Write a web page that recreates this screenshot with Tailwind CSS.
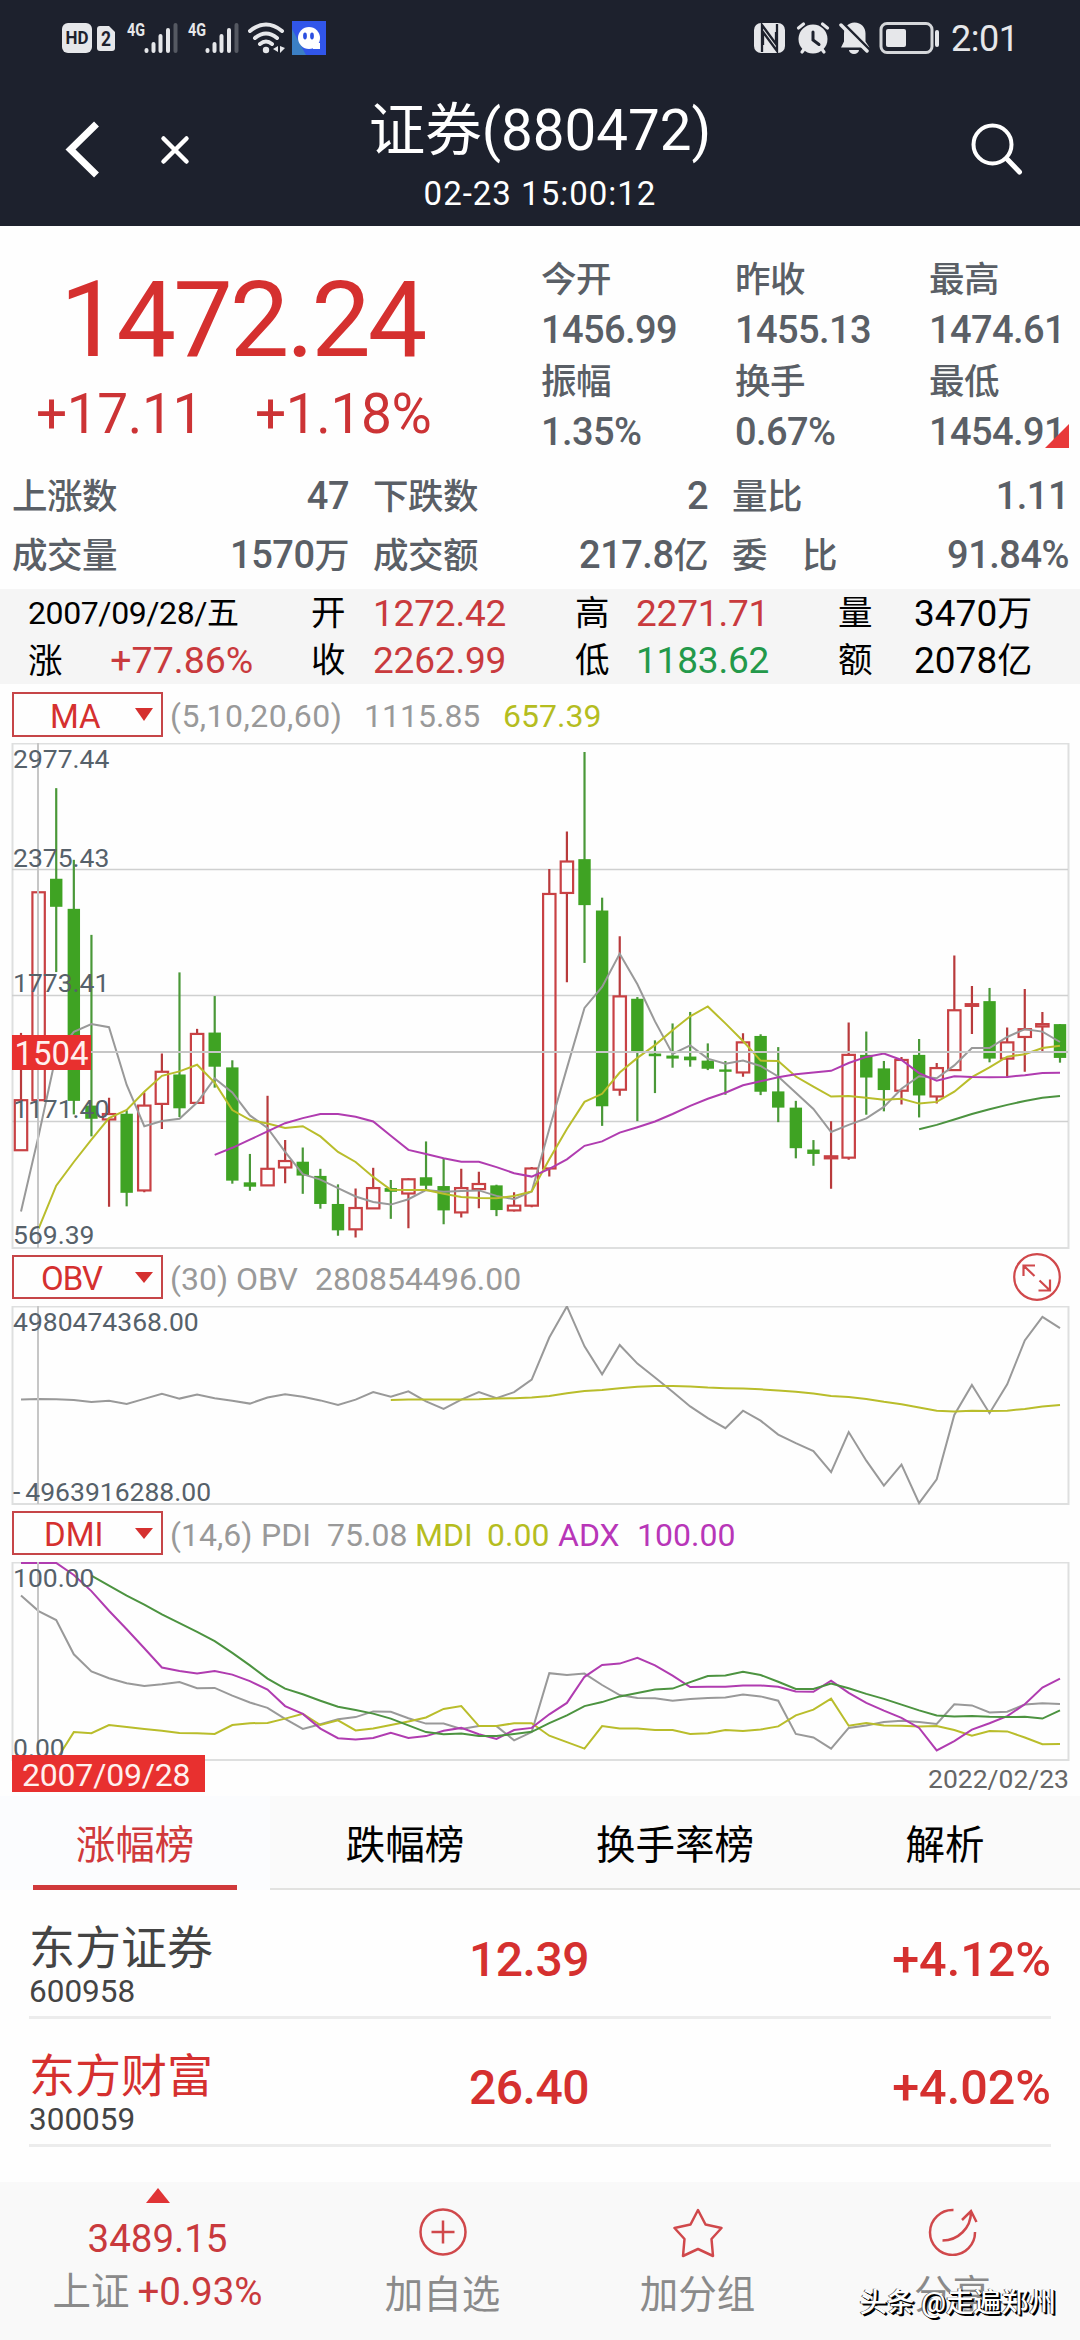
<!DOCTYPE html>
<html lang="zh-CN">
<head>
<meta charset="utf-8">
<title>证券(880472)</title>
<script src="https://cdn.jsdelivr.net/npm/@tailwindcss/browser@4"></script>
</head>
<body class="w-[1080px] h-[2340px] overflow-hidden bg-[#fefefe] font-[Roboto,'Noto_Sans_CJK_SC',sans-serif] flex flex-col whitespace-nowrap">

<!-- Status bar and title -->
<header class="h-[226px] shrink-0 bg-[#1d212d] text-white flex flex-col">
  <div class="h-[75px] flex items-center justify-between pl-[62px] pr-[66px] text-[#e6e7ea]">
    <div class="flex items-center">
      <svg width="54" height="32" viewBox="0 0 54 32" fill="#e6e7ea"><rect y="1" width="30" height="30" rx="6"/><path d="M38 4h9l6 6v16a3 3 0 0 1-3 3H38a3 3 0 0 1-3-3V7a3 3 0 0 1 3-3z"/><text x="3.500" y="22" font-size="18" font-weight="700" textLength="23" lengthAdjust="spacingAndGlyphs" fill="#1d212d">HD</text><text x="39" y="24" font-size="20" font-weight="700" textLength="10" lengthAdjust="spacingAndGlyphs" fill="#1d212d">2</text></svg>
      <svg class="ml-[11px] overflow-visible" width="51" height="34" viewBox="0 0 51 34" fill="none" stroke="#e6e7ea" stroke-width="4" stroke-linecap="round"><text x="0" y="15" font-size="19" font-weight="700" textLength="18" lengthAdjust="spacingAndGlyphs" fill="#e6e7ea" stroke="none">4G</text><path d="M19.500 29v1M26.500 23v7M33.500 15v15M41 9v21"/><path d="M48.500 4v26" stroke="#555962"/></svg>
      <svg class="ml-[10px] overflow-visible" width="51" height="34" viewBox="0 0 51 34" fill="none" stroke="#e6e7ea" stroke-width="4" stroke-linecap="round"><text x="0" y="15" font-size="19" font-weight="700" textLength="18" lengthAdjust="spacingAndGlyphs" fill="#e6e7ea" stroke="none">4G</text><path d="M19.500 29v1M26.500 23v7M33.500 15v15M41 9v21"/><path d="M48.500 4v26" stroke="#555962"/></svg>
      <svg class="ml-[9px]" width="38" height="32" viewBox="0 0 38 32" fill="none" stroke="#e6e7ea" stroke-width="4" stroke-linecap="round"><path d="M2 9Q18 -4 34 9M7 16q11-9 22 0M12 22q6-5 12 0"/><circle cx="18" cy="28" r="3.200" fill="#e6e7ea" stroke="none"/><path d="M30 24v6l-5-3zM32 24v7l5-5z" fill="#e6e7ea" stroke="none"/></svg>
      <svg class="ml-[6px]" width="34" height="34" viewBox="0 0 34 34"><rect width="34" height="34" fill="#3156ea"/><path d="M0 34V8l14 26z" fill="#3b7fc4"/><circle cx="17" cy="17" r="11" fill="#fff"/><path d="M21 22h7v6h-7z" fill="#fff"/><ellipse cx="13" cy="15" rx="1.900" ry="3.400" fill="#2c4fe0"/><ellipse cx="20" cy="15" rx="1.900" ry="3.400" fill="#2c4fe0"/></svg>
    </div>
    <div class="flex items-center">
      <svg width="31" height="32" viewBox="0 0 31 32"><rect y="1" width="31" height="30" rx="7" fill="#e6e7ea"/><path d="M8 30V3l14 19V10M23 2v27L9 10v13" fill="none" stroke="#1d212d" stroke-width="2.300"/></svg>
      <svg class="ml-[11px]" width="34" height="34" viewBox="0 0 34 34" fill="none" stroke="#e6e7ea" stroke-width="4" stroke-linecap="round"><circle cx="17" cy="18" r="14.500" fill="#e6e7ea" stroke="none"/><path d="M2.500 7l5-4M31.500 7l-5-4M6 31l3-4M28 31l-3-4" stroke-width="3.200"/><path d="M17 11v8l6 4.500" stroke="#1d212d" stroke-width="3"/></svg>
      <svg class="ml-[9px]" width="31" height="34" viewBox="0 0 31 34"><path d="M15.500 1.500c7 0 11 5 11 11v8l4 6H2l3-6v-8c0-6 4-11 10.500-11zM10 29h10a5 4 0 0 1-10 0z" fill="#e6e7ea"/><path d="M1 0l29 29" stroke="#1d212d" stroke-width="4"/><path d="M2 4l26 26" stroke="#e6e7ea" stroke-width="3.500" stroke-linecap="round"/></svg>
      <svg class="ml-[9px]" width="62" height="34" viewBox="0 0 62 34"><rect x="2" y="2.500" width="51" height="29" rx="6" fill="none" stroke="#d5d7da" stroke-width="3"/><rect x="7" y="8" width="20" height="18" rx="2" fill="#e6e7ea"/><rect x="56" y="9" width="4" height="17" rx="2" fill="#e6e7ea"/></svg>
      <span class="ml-[10px] pt-[2px] text-[36px] leading-[40px] w-[63px] tracking-[-0.5px]">2:01</span>
    </div>
  </div>
  <div class="flex-1 grid grid-cols-[270px_1fr_270px]">
    <div class="flex pt-[45px] pl-[62px]">
      <svg width="40" height="60" viewBox="0 0 40 60" fill="none" stroke="#fff" stroke-width="7"><path d="M34.500 4L8.500 29.500 34.500 55"/></svg>
      <svg class="ml-[58px] mt-[15px]" width="30" height="30" viewBox="0 0 30 30" fill="none" stroke="#fff" stroke-width="4.500" stroke-linecap="round"><path d="M3.500 3.500l23 23M26.500 3.500l-23 23"/></svg>
    </div>
    <div class="flex flex-col items-center">
      <h1 class="mt-[18px] text-[56.500px] leading-[76px] font-normal">证券(880472)</h1>
      <p class="mt-[3px] text-[33px] leading-[44px] tracking-[1px]">02-23 15:00:12</p>
    </div>
    <div class="flex justify-end pt-[47px] pr-[55px]">
      <svg width="54" height="54" viewBox="0 0 54 54" fill="none" stroke="#fff" stroke-linecap="round"><circle cx="21.500" cy="22.500" r="19" stroke-width="4"/><path d="M36 37l12.500 13" stroke-width="5"/></svg>
    </div>
  </div>
</header>

<!-- Quote summary -->
<section class="h-[363px] shrink-0 flex flex-col pt-[26px] text-[#5a5f66] font-medium text-[38px]">
  <div class="flex">
    <div class="w-[541px] text-[#d5302f] font-normal">
      <div class="h-[132px] pl-[60px] pt-[2px] text-[106px] leading-[132px] tracking-[-3px]">1472.24</div>
      <div class="flex h-[60px] text-[55px] leading-[61px] text-[#cc3335] tracking-[-0.400px]"><span class="w-[221px] pl-[36px]">+17.11</span><span class="pl-[34px]">+1.18%</span></div>
    </div>
    <div class="grid grid-cols-[194px_194px_140px] grid-rows-[52px_51px_51px_52px] items-center leading-[50px] tracking-[-0.600px]">
      <span class="text-[35.500px] pt-[4px]">今开</span><span class="text-[35.500px] pt-[4px]">昨收</span><span class="text-[35.500px] pt-[4px]">最高</span>
      <span>1456.99</span><span>1455.13</span><span>1474.61</span>
      <span class="text-[35.500px] pt-[3px]">振幅</span><span class="text-[35.500px] pt-[3px]">换手</span><span class="text-[35.500px] pt-[3px]">最低</span>
      <span>1.35%</span><span>0.67%</span>
      <span class="relative">1454.91<svg class="absolute right-0 bottom-[9px]" width="24" height="24" viewBox="0 0 24 24"><path d="M24 0v24H0z" fill="#e8393a"/></svg></span>
    </div>
  </div>
  <div class="mt-[9px] grid grid-cols-[337px_335px_337px] gap-x-6 grid-rows-[59px_59px] items-center leading-[50px] pl-3 tracking-[-0.500px]">
    <div class="flex justify-between"><span class="text-[35.500px] pt-px">上涨数</span><span>47</span></div>
    <div class="flex justify-between"><span class="text-[35.500px] pt-px">下跌数</span><span>2</span></div>
    <div class="flex justify-between"><span class="text-[35.500px] pt-px">量比</span><span>1.11</span></div>
    <div class="flex justify-between"><span class="text-[35.500px] pt-px">成交量</span><span>1570<span class="text-[35px]">万</span></span></div>
    <div class="flex justify-between"><span class="text-[35.500px] pt-px">成交额</span><span>217.8<span class="text-[35px]">亿</span></span></div>
    <div class="flex justify-between"><span class="text-[35.500px] pt-px">委　比</span><span>91.84%</span></div>
  </div>
</section>

<!-- Values of the selected bar -->
<section class="h-[95px] shrink-0 bg-[#f5f5f5] text-black text-[37px] grid grid-cols-[283px_62px_202px_61px_202px_76px_1fr] grid-rows-[47px_47px] leading-[49px] pl-7 tracking-[-0.200px]">
  <span class="text-[32px] tracking-[-0.400px]">2007/09/28/五</span><span class="text-[34.500px]">开</span><span class="text-[#c93a3d]">1272.42</span><span class="text-[34.500px]">高</span><span class="text-[#c93a3d]">2271.71</span><span class="text-[34.500px]">量</span><span class="tracking-normal">3470<span class="text-[35px]">万</span></span>
  <span class="text-[34.500px]">涨<span class="text-[37.500px] pl-[48px] text-[#c93a3d] tracking-normal">+77.86%</span></span><span class="text-[34.500px]">收</span><span class="text-[#c93a3d]">2262.99</span><span class="text-[34.500px]">低</span><span class="text-[#23994a]">1183.62</span><span class="text-[34.500px]">额</span><span class="tracking-normal">2078<span class="text-[35px]">亿</span></span>
</section>

<!-- Moving averages -->
<div class="h-[59px] shrink-0 flex pt-[8px] pl-3 text-[32px] leading-[49px] text-[#999]">
  <div class="w-[151px] h-[45px] border-2 border-[#c64548] text-[#d5302f] flex items-center pl-[36px] pr-[8px] justify-between text-[33px]"><span class="pt-[3px]">MA</span><svg width="18" height="13" viewBox="0 0 18 13"><path d="M0 0h18L9 13z" fill="#d5302f"/></svg></div>
  <span class="ml-[7px] w-[194px] tracking-[0.450px]">(5,10,20,60)</span><span class="w-[139px]">1115.85</span><span class="text-[#b5bd1f]">657.39</span>
</div>
<section class="relative h-[506px] shrink-0">
  <svg id="price" class="block" width="1080" height="506" viewBox="0 743 1080 506"></svg>
  <div class="absolute left-[13px] top-0 text-[26.500px] leading-[30px] text-[#56616a]">
    <span class="absolute left-0 top-[1px]">2977.44</span><span class="absolute left-0 top-[100px]">2375.43</span><span class="absolute left-0 top-[225px]">1773.41</span><span class="absolute left-0 top-[351px]">1171.40</span><span class="absolute left-0 top-[477px]">569.39</span>
  </div>
  <span class="absolute left-3 top-[292px] w-[79px] h-[35px] bg-[#e8302f] text-[#fff0ee] text-[33px] leading-[38px] text-center">1504</span>
</section>

<!-- On-balance volume -->
<div class="h-[57px] shrink-0 flex pt-[6px] pl-3 pr-[19px] text-[32px] leading-[48px] text-[#999]">
  <div class="w-[151px] h-[44px] border-2 border-[#c64548] text-[#d5302f] flex items-center pl-[27px] pr-[8px] justify-between text-[33px] tracking-[-1px]"><span class="pt-[3px]">OBV</span><svg width="18" height="11" viewBox="0 0 18 11"><path d="M0 0h18L9 11z" fill="#d5302f"/></svg></div>
  <span class="ml-[7px] w-[66px]">(30)</span><span class="w-[79px]">OBV</span><span>280854496.00</span>
  <svg class="ml-auto -mt-[3px]" width="48" height="50" viewBox="0 0 48 50" fill="none" stroke="#d0484b" stroke-width="2.200"><circle cx="24" cy="25" r="22.800"/><path d="M21.500 24L11 14M10.500 24V13.500H22M26.500 28.500L36.500 38M37 27.500v11H25.500"/></svg>
</div>
<section class="relative h-[199px] shrink-0">
  <svg id="obv" class="block" width="1080" height="199" viewBox="0 1306 1080 199"></svg>
  <div class="absolute left-[13px] top-0 text-[26.500px] leading-[30px] text-[#56616a]">
    <span class="absolute left-0 top-[1px]">4980474368.00</span><span class="absolute left-0 top-[171px]"><span class="tracking-[5px]">-</span>4963916288.00</span>
  </div>
</section>

<!-- Directional movement -->
<div class="h-[57px] shrink-0 flex pt-[6px] pl-3 text-[32px] leading-[48px] text-[#999]">
  <div class="w-[151px] h-[44px] border-2 border-[#c64548] text-[#d5302f] flex items-center pl-[30px] pr-[8px] justify-between text-[33px]"><span class="pt-[3px]">DMI</span><svg width="18" height="11" viewBox="0 0 18 11"><path d="M0 0h18L9 11z" fill="#d5302f"/></svg></div>
  <span class="ml-[7px] w-[91px]">(14,6)</span><span class="w-[66px]">PDI</span><span class="w-[88px]">75.08</span><span class="w-[72px] text-[#b5bd1f]">MDI</span><span class="w-[71px] text-[#b5bd1f]">0.00</span><span class="w-[79px] text-[#b836b8]">ADX</span><span class="text-[#b836b8]">100.00</span>
</div>
<section class="relative h-[234px] shrink-0">
  <svg id="dmi" class="block" width="1080" height="200" viewBox="0 1562 1080 200"></svg>
  <div class="absolute left-[13px] top-0 text-[26.500px] leading-[30px] text-[#56616a]">
    <span class="absolute left-0 top-[1px]">100.00</span><span class="absolute left-0 top-[171px]">0.00</span>
  </div>
  <span class="absolute left-3 top-[193px] w-[193px] h-[37px] bg-[#e8302f] text-[#fff0ee] text-[32px] leading-[40px] pl-[10px] tracking-[-0.200px]">2007/09/28</span>
  <span class="absolute right-[11px] top-[201px] text-[26.500px] leading-[32px] text-[#666]">2022/02/23</span>
</section>

<!-- Ranking tabs -->
<nav class="h-[94px] shrink-0 grid grid-cols-4 bg-[#fafafa] text-[39.500px] leading-[100px] text-center text-black">
  <span class="relative h-[94px] bg-[#fbfcfe] text-[#d0393b]">涨幅榜<i class="absolute left-[33px] bottom-0 w-[204px] h-[5px] bg-[#d0393b]"></i></span>
  <span class="h-[94px] border-b-2 border-[#e2e2e0]">跌幅榜</span><span class="h-[94px] border-b-2 border-[#e2e2e0]">换手率榜</span><span class="h-[94px] border-b-2 border-[#e2e2e0]">解析</span>
</nav>
<main class="h-[292px] shrink-0 overflow-hidden px-[29px] text-[#d5302f]">
  <div class="h-[129px] border-b-[3px] border-[#ececec] grid grid-cols-[440px_1fr_auto]">
    <div class="flex flex-col text-[#444] pt-[30px]"><span class="text-[46px] leading-[56px]">东方证券</span><span class="text-[31.500px] leading-[32px]">600958</span></div>
    <span class="text-[48px] leading-[139px] font-medium tracking-[-0.500px]">12.39</span><span class="text-[48.500px] leading-[139px] font-medium">+4.12%</span>
  </div>
  <div class="h-[128px] border-b-[3px] border-[#ececec] grid grid-cols-[440px_1fr_auto]">
    <div class="flex flex-col pt-[29px]"><span class="text-[46px] leading-[56px]">东方财富</span><span class="text-[31.500px] leading-[32px] text-[#444]">300059</span></div>
    <span class="text-[48px] leading-[137px] font-medium tracking-[-0.500px]">26.40</span><span class="text-[48.500px] leading-[137px] font-medium">+4.02%</span>
  </div>
  <div class="pt-[31px] text-[46px] leading-[56px] text-[#444]">光大证券</div>
</main>

<!-- Bottom actions -->
<footer class="relative flex-1 bg-[#f9f9f9] grid grid-cols-[315px_255px_255px_255px] text-[38.500px] leading-[48px] text-[#8a8a8a]">
  <div class="flex flex-col items-center text-[#c93a3d]">
    <svg class="mt-[6px]" width="24" height="15" viewBox="0 0 24 15"><path d="M12 0l12 15H0z" fill="#e03436"/></svg>
    <span class="mt-[12px]">3489.15</span>
    <span class="mt-[5px]"><span class="text-[#8a8a8a]">上证</span><span class="pl-[8px]">+0.93%</span></span>
  </div>
  <div class="flex flex-col items-center pt-[26px]">
    <svg width="48" height="48" viewBox="0 0 48 48" fill="none" stroke="#d0484b" stroke-width="2.500"><circle cx="24" cy="24" r="22.500"/><path d="M24 12.500v23M12.500 24h23"/></svg>
    <span class="mt-[15px]">加自选</span>
  </div>
  <div class="flex flex-col items-center pt-[26px]">
    <svg width="50" height="50" viewBox="0 0 50 50" fill="none" stroke="#d0484b" stroke-width="2.500" stroke-linejoin="round"><path d="M25 2l7.500 14.500L48.500 20 38.500 31l1.500 17-15-7-15 7 1.500-17L1.500 20l16-3.500z"/></svg>
    <span class="mt-[13px]">加分组</span>
  </div>
  <div class="flex flex-col items-center pt-[26px]">
    <svg width="50" height="48" viewBox="0 0 50 48" fill="none" stroke="#d0484b" stroke-width="2.500"><path d="M25.500 2A22.500 22.500 0 1 0 47 24M14.500 32.500C30 32.500 43 20 43 4M34 12l9-9 5.500 11"/></svg>
    <span class="mt-[15px]">分享</span>
  </div>
  <span class="absolute right-[24px] bottom-[18px] text-[27.500px] leading-[38px] font-medium text-white [text-shadow:1px_1px_0_#000,2px_2px_0_#000,-1px_0_0_#555]">头条 @走遍郑州</span>
</footer>

<script>
const GRAY = '#999', YELLOW = '#b9bd2b', PURPLE = '#b03cb0', GREEN = '#4c9340';
const x = i => 21 + i * 17.61;

// line: first index, colour, values; y maps a value to a page row
function line(start, colour, values, y) {
  const pts = values.map((v, k) => x(start + k).toFixed(1) + ',' + y(v).toFixed(1)).join(' ');
  return `<polyline points="${pts}" fill="none" stroke="${colour}" stroke-width="2"/>`;
}
function frame(top, bottom) {
  return `<rect x="12.500" y="${top + 1}" width="1056" height="${bottom - top - 2}" fill="none" stroke="#dedfdf" stroke-width="2"/>`;
}
function cursor(top, bottom) {
  return `<path d="M38 ${top}V${bottom}" stroke="#c6c6c6" stroke-width="2"/>`;
}

// direction, high, body top, body bottom, low
const candles = `r 896 1095 1243 1243,r 480 480 1095 1095,g 172 440 523 716,g 384 529 1097 1137,g 606 1111 1150 1202,r 1088 1136 1152 1410,g 1125 1135 1369 1409,r 1072 1111 1362 1367,r 957 1011 1106 1180,g 717 1019 1119 1145,r 884 899 1103 1103,g 787 895 996 1058,g 977 998 1333 1342,g 1254 1338 1351 1363,r 1082 1298 1347 1347,r 1213 1275 1294 1341,g 1235 1277 1318 1372,g 1298 1319 1402 1416,g 1344 1402 1480 1496,r 1356 1414 1477 1501,r 1295 1355 1415 1415,g 1331 1355 1366 1446,r 1326 1329 1371 1474,g 1217 1323 1348 1362,g 1269 1349 1421 1462,r 1298 1355 1427 1442,r 1307 1343 1358 1415,g 1345 1347 1420 1438,r 1367 1407 1421 1424,r 1293 1297 1407 1412,r 411 485 1297 1321,r 300 389 482 746,g 65 382 518 689,g 496 534 1113 1171,r 610 788 1064 1082,g 790 795 950 1157,g 918 957 965 1074,g 868 963 972 999,g 834 966 977 996,g 927 978 1002 1006,g 979 1004 1011 1079,r 897 924 1013 1026,g 900 905 1070 1080,g 938 1069 1117 1160,g 1097 1117 1237 1267,g 1213 1241 1254 1289,r 1157 1261 1267 1357,r 865 961 1265 1271,g 892 961 1028 1138,g 979 1001 1065 1128,r 967 976 1067 1108,g 914 961 1081 1146,r 985 1000 1084 1105,r 667 829 1006 1006,r 757 811 816 899,g 763 802 972 983,r 880 924 972 1026,r 766 885 908 1011,r 834 870 877 952,g 870 870 970 984`.split(',');
const py = v => 730 + v / 2.958;
let s = frame(742.5, 1249) + '<path d="M12 869.5H1068M12 995.5H1068M12 1121.5H1068" stroke="#cfd0d0" stroke-width="1.5"/>';
candles.forEach((c, i) => {
  const [d, ...n] = c.split(' ');
  const [h, t, b, l] = n.map(v => py(+v));
  const cx = x(i);
  if (d === 'g') {
    s += `<path d="M${cx} ${h}V${l}" stroke="#4a9838" stroke-width="2.200"/><rect x="${cx - 6.2}" y="${t}" width="12.4" height="${b - t}" fill="#3fa323"/>`;
  } else {
    s += `<path d="M${cx} ${h}V${t}M${cx} ${b}V${l}" stroke="#b83a3c" stroke-width="2.200"/><rect x="${cx - 6.2}" y="${t}" width="12.4" height="${b - t}" fill="none" stroke="#c84144" stroke-width="2.200"/>`;
  }
});
s += line(0, GRAY, [1424,1200,960,893,870,879,1050,1172,1157,1150,1102,1031,1072,1140,1177,1248,1314,1330,1355,1380,1396,1404,1388,1361,1366,1364,1362,1378,1388,1365,1180,1000,822,760,662,752,862,958,933,972,987,978,994,1025,1073,1121,1189,1168,1149,1115,1061,1024,1030,992,941,941,908,885,892,923], py);
s += line(1, YELLOW, [1475,1348,1278,1212,1148,1124,1070,1023,1010,990,1043,1124,1153,1164,1177,1172,1202,1248,1278,1322,1360,1361,1361,1372,1381,1384,1385,1378,1365,1270,1180,1100,1076,1013,970,932,888,847,818,868,920,978,979,1025,1055,1084,1083,1088,1094,1091,1105,1100,1070,1027,998,966,959,941,934], py);
s += line(11, PURPLE, [1257,1236,1212,1187,1163,1148,1136,1136,1144,1158,1200,1242,1254,1267,1277,1277,1293,1311,1321,1298,1270,1230,1217,1191,1175,1158,1136,1112,1091,1073,1051,1039,1027,1018,1013,1008,985,967,957,976,1015,1037,1024,1026,1027,1026,1021,1015,1014], py);
s += line(51, GREEN, [1181,1168,1152,1136,1122,1109,1097,1088,1083], py);
s += cursor(743, 1248) + '<path d="M12 1052H1068" stroke="#c6c6c6" stroke-width="2"/>';
document.getElementById('price').innerHTML = s;

const vy = v => 1250 + v / 2.8;
document.getElementById('obv').innerHTML = frame(1305.5, 1505) +
  line(0, GRAY, [419,417,418,420,426,422,431,417,403,416,405,415,422,430,413,404,411,421,434,419,398,411,396,424,445,419,398,415,398,363,245,158,270,348,266,318,357,397,438,471,499,450,478,517,541,563,622,510,590,660,601,709,642,462,378,457,376,253,187,219], vy) +
  line(21, YELLOW, [420,419,419,419,419,418,416,415,413,409,401,395,392,387,383,381,381,382,385,387,388,390,393,397,402,409,412,417,425,432,441,450,452,450,451,450,445,438,434], vy) +
  cursor(1306, 1504);

document.getElementById('dmi').innerHTML = frame(1561.5, 1761) +
  line(0, GRAY, [967,1011,1036,1132,1180,1199,1213,1221,1216,1210,1227,1226,1248,1267,1282,1313,1341,1328,1314,1308,1292,1293,1311,1326,1326,1341,1333,1333,1373,1350,1185,1190,1186,1218,1246,1254,1255,1262,1257,1254,1253,1245,1250,1262,1355,1365,1396,1338,1331,1322,1318,1322,1327,1272,1275,1295,1293,1273,1269,1271], vy) +
  line(2, YELLOW, [1428,1350,1353,1330,1336,1341,1346,1352,1353,1355,1330,1325,1324,1312,1299,1330,1317,1345,1340,1330,1320,1309,1285,1277,1333,1333,1325,1325,1360,1378,1396,1333,1340,1340,1344,1344,1355,1353,1344,1347,1343,1334,1303,1287,1256,1332,1324,1331,1332,1334,1333,1344,1360,1347,1348,1365,1384,1383], vy) +
  line(0, PURPLE, [876,876,876,910,955,1010,1062,1115,1169,1179,1186,1179,1189,1207,1231,1277,1299,1340,1367,1371,1366,1352,1366,1361,1346,1338,1356,1369,1344,1338,1300,1268,1195,1162,1158,1142,1163,1192,1224,1223,1223,1219,1219,1223,1236,1237,1206,1240,1268,1290,1310,1338,1401,1375,1343,1325,1305,1272,1225,1200], vy) +
  line(4, GREEN, [912,940,968,993,1020,1045,1069,1095,1128,1163,1200,1228,1244,1262,1279,1288,1298,1312,1331,1350,1356,1354,1361,1361,1355,1349,1325,1303,1277,1266,1250,1240,1231,1228,1210,1193,1191,1181,1190,1209,1229,1229,1214,1227,1243,1257,1273,1289,1303,1306,1305,1307,1308,1307,1312,1289], vy) +
  cursor(1562, 1760);
</script>
</body>
</html>
